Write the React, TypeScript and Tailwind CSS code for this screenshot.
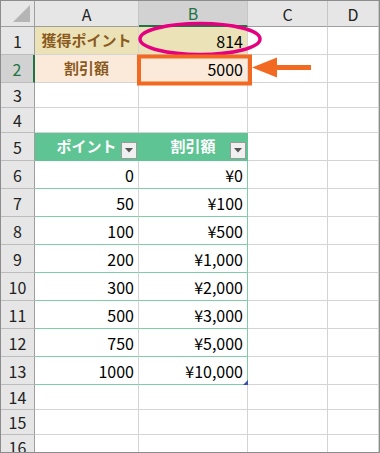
import React from 'react';

const font = { fontFamily: '"Noto Sans CJK JP", "Liberation Sans", sans-serif' };

const cols = ['A', 'B', 'C', 'D'];
const grid = 'grid grid-cols-[34px_104px_109px_80px_1fr]';

const tableRows: [string, string][] = [
  ['0', '¥0'],
  ['50', '¥100'],
  ['100', '¥500'],
  ['200', '¥1,000'],
  ['300', '¥2,000'],
  ['500', '¥3,000'],
  ['750', '¥5,000'],
  ['1000', '¥10,000'],
];

function RowHead({ n, selected }: { n: number; selected?: boolean }) {
  return (
    <div
      className={`flex items-center justify-center border-b border-[#bcbcbc] text-[16px] ${
        selected
          ? 'bg-[#d2d2d2] text-[#217346] border-r-2 border-r-[#217346]'
          : 'bg-[#e6e6e6] text-[#222] border-r border-r-[#9e9e9e]'
      }`}
    >
      {n}
    </div>
  );
}

function Cell({ className = '', children }: { className?: string; children?: React.ReactNode }) {
  return <div className={`border-r border-b border-[#d4d4d4] ${className}`}>{children}</div>;
}

function FilterButton() {
  return (
    <div className="absolute right-[1px] bottom-[1px] flex h-[17px] w-[16px] items-center justify-center border border-[#9a9a9a] bg-[#f0f0f0]">
      <svg width="8" height="5" viewBox="0 0 8 5">
        <path d="M0 0h8L4 4.5z" fill="#555" />
      </svg>
    </div>
  );
}

export default function App() {
  return (
    <div className="relative h-[453px] w-[380px] overflow-hidden border border-[#8c8c8c] bg-white" style={font}>
      {/* column headers */}
      <div className={`${grid} h-[26px]`}>
        <div className="relative border-r border-b border-[#9e9e9e] bg-[#e6e6e6]">
          <svg className="absolute right-[4px] bottom-[4px]" width="17" height="17" viewBox="0 0 17 17">
            <path d="M17 0v17H0z" fill="#b5b5b5" />
          </svg>
        </div>
        {cols.map((c) => (
          <div
            key={c}
            className={`flex items-center justify-center border-r border-[#c6c6c6] text-[16px] ${
              c === 'B'
                ? 'bg-[#d2d2d2] text-[#217346] border-b-2 border-b-[#217346]'
                : 'bg-[#e6e6e6] text-[#222] border-b border-b-[#9e9e9e]'
            }`}
          >
            {c}
          </div>
        ))}
      </div>

      {/* row 1 */}
      <div className={`${grid} h-[28px]`}>
        <RowHead n={1} />
        <Cell className="flex items-center justify-center bg-[#ece2b8] text-[15px] font-bold text-[#8a5a1e]">獲得ポイント</Cell>
        <Cell className="flex items-center justify-end bg-[#ece2b8] pr-[4px] text-[16px] text-black">814</Cell>
        <Cell />
        <Cell />
      </div>

      {/* row 2 */}
      <div className={`${grid} h-[28px]`}>
        <RowHead n={2} selected />
        <Cell className="flex items-center justify-center bg-[#fbeada] text-[15px] font-bold text-[#8a5a1e]">割引額</Cell>
        <Cell className="flex items-center justify-end bg-[#fbeada] pr-[4px] text-[16px] text-black">5000</Cell>
        <Cell />
        <Cell />
      </div>

      {[3, 4].map((n) => (
        <div key={n} className={`${grid} h-[25px]`}>
          <RowHead n={n} />
          <Cell />
          <Cell />
          <Cell />
          <Cell />
        </div>
      ))}

      {/* row 5: table header */}
      <div className={`${grid} h-[28px]`}>
        <RowHead n={5} />
        <div className="relative flex items-center justify-center border-r border-b border-[#5ec493] bg-[#5ec493] text-[15px] font-bold text-white">
          ポイント
          <FilterButton />
        </div>
        <div className="relative flex items-center justify-center border-r border-b border-[#5ec493] bg-[#5ec493] text-[15px] font-bold text-white">
          割引額
          <FilterButton />
        </div>
        <Cell />
        <Cell />
      </div>

      {tableRows.map(([p, d], i) => (
        <div key={p} className={`${grid} h-[28px]`}>
          <RowHead n={i + 6} />
          <div className="flex items-center justify-end border-r border-r-[#d4d4d4] border-b border-b-[#7fcca6] pr-[4px] text-[16px] text-black">
            {p}
          </div>
          <div className="relative flex items-center justify-end border-r border-b border-[#7fcca6] pr-[4px] text-[16px] text-black">
            {d}
            {i === 7 && (
              <svg className="absolute right-[-1px] bottom-[-1px]" width="5" height="5" viewBox="0 0 5 5">
                <path d="M5 0v5H0z" fill="#3b4fa8" />
              </svg>
            )}
          </div>
          <Cell />
          <Cell />
        </div>
      ))}

      {[14, 15, 16].map((n) => (
        <div key={n} className={`${grid} h-[25px]`}>
          <RowHead n={n} />
          <Cell />
          <Cell />
          <Cell />
          <Cell />
        </div>
      ))}

      {/* annotations */}
      <svg className="pointer-events-none absolute left-0 top-0" width="380" height="453" viewBox="0 0 380 453">
        <ellipse cx="199" cy="38" rx="60" ry="15.5" fill="none" stroke="#e5007f" strokeWidth="3.5" />
        <rect x="138" y="55.5" width="111" height="27" fill="none" stroke="#f26a22" strokeWidth="4" />
        <rect x="272" y="64" width="38" height="5" fill="#f26a22" />
        <path d="M251 66.5L276 56.5V76.5z" fill="#f26a22" />
      </svg>
    </div>
  );
}
